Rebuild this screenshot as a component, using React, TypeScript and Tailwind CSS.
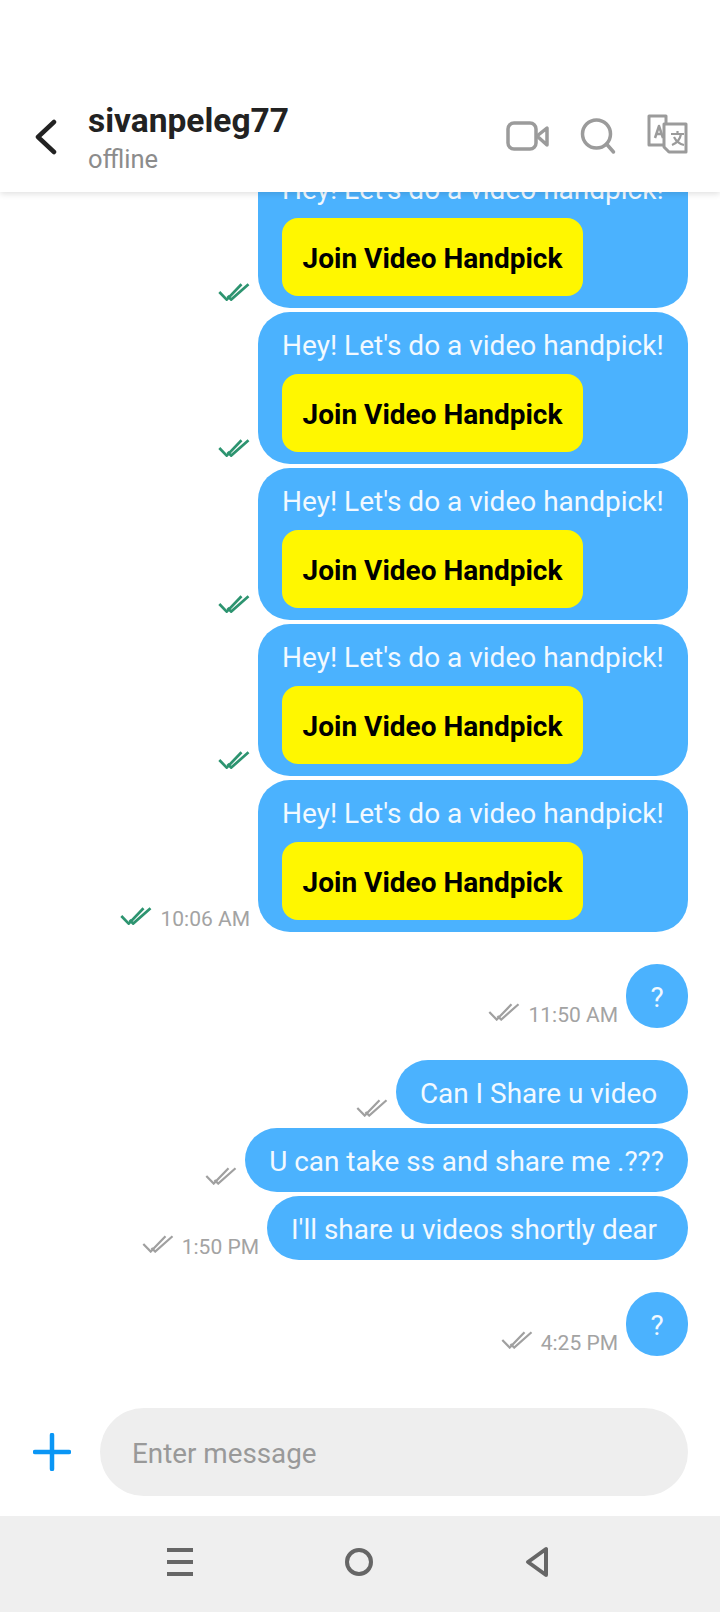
const sans = "font-['Roboto',sans-serif]";

function Ticks({ color, width = 2.2 }: { color: string; width?: number }) {
  return (
    <svg className="mb-[7px]" width="32" height="18" viewBox="0 0 32 18" fill="none" stroke={color} strokeWidth={width}>
      <path d="M1.3 9l7.4 7.6L23.5 1.3" />
      <path d="M9.5 13l3.7 3.6L30.5 1.3" />
    </svg>
  );
}

function Bubble({ text, time }: { text: string; time?: string }) {
  return (
    <div className="flex items-end justify-end">
      <div className="mr-2 flex items-end gap-2">
        <Ticks color="#a0a0a0" />
        {time && <span className="mb-px text-[21px] leading-6 text-[#a3a3a3]">{time}</span>}
      </div>
      <div className="flex h-16 min-w-[62px] items-center justify-center rounded-[32px] bg-[#4bb2fe] px-6 pt-1 text-[27.9px] whitespace-pre text-[#f2f9ff]">
        {text}
      </div>
    </div>
  );
}

function Invite({ time }: { time?: string }) {
  return (
    <div className="flex items-end justify-end">
      <div className="mr-2 flex items-end gap-2">
        <Ticks color="#2d9470" width={2.7} />
        {time && <span className="mb-px text-[21px] leading-6 text-[#a3a3a3]">{time}</span>}
      </div>
      <div className="h-[152px] w-[430px] rounded-[32px] bg-[#4bb2fe] px-6 pt-[14px]">
        <div className="text-[28px] leading-10 whitespace-nowrap text-[#f2f9ff]">Hey! Let's do a video handpick!</div>
        <div className="mt-2 flex h-[78px] w-[301px] items-center justify-center rounded-2xl bg-[#fff700] pt-1 text-[28px] font-bold text-black">
          Join Video Handpick
        </div>
      </div>
    </div>
  );
}

export default function App() {
  return (
    <div className={`${sans} flex h-[1612px] w-[720px] flex-col overflow-hidden bg-white`}>
      <header className="relative z-10 flex h-[192px] shrink-0 items-start bg-white pt-[100px] shadow-[0_2px_6px_rgba(0,0,0,0.12)]">
        <svg className="mt-[19px] ml-[34px]" width="24" height="36" viewBox="0 0 24 36" fill="none" stroke="#222" strokeWidth="4.5" strokeLinecap="round" strokeLinejoin="round">
          <path d="M20 3L4 18l16 15" />
        </svg>
        <div className="mt-px ml-[30px] flex-1">
          <div className="text-[33.5px] leading-10 font-bold text-[#222]">sivanpeleg77</div>
          <div className="text-[25.5px] leading-9 text-[#8c8c8c]">offline</div>
        </div>
        <svg className="mt-[12px] mr-[30px]" width="184" height="44" viewBox="0 0 184 44" fill="none" stroke="#9b9b9b" strokeWidth="3.5" strokeLinejoin="round">
          <rect x="2" y="11" width="28" height="26" rx="6" />
          <path d="M31 24l10-8v17z" />
          <circle cx="90.5" cy="22" r="14" />
          <path d="M100.5 32l7 8" strokeLinecap="round" />
          <path d="M157 33h-14V4h17v7" strokeWidth="3" />
          <path d="M160 12h20v28h-17l-5-5V12z" strokeWidth="3" />
          <path d="M149 26l4-12 4 12M150.5 22h5" strokeWidth="2.5" />
          <path d="M165 22h13M171.5 19v3M175 22c-1 6-4 9-9 11M168 25c2 4 5 7 10 8" strokeWidth="2.2" />
        </svg>
      </header>
      <main className="flex min-h-0 flex-1 flex-col justify-end overflow-hidden pr-8 pb-[52px]">
        <div className="flex flex-col gap-1">
          <Invite />
          <Invite />
          <Invite />
          <Invite />
          <Invite time="10:06 AM" />
        </div>
        <div className="mt-8"><Bubble text="?" time="11:50 AM" /></div>
        <div className="mt-8 flex flex-col gap-1">
          <Bubble text="Can I Share u video " />
          <Bubble text="U can take ss and share me .???" />
          <Bubble text="I'll share u videos shortly dear " time="1:50 PM" />
        </div>
        <div className="mt-8"><Bubble text="?" time="4:25 PM" /></div>
      </main>
      <div className="flex h-[108px] shrink-0 items-start pr-8">
        <svg className="mt-[25px] ml-[33px] shrink-0" width="38" height="38" viewBox="0 0 38 38" stroke="#0a96f5" strokeWidth="4.5" strokeLinecap="round">
          <path d="M19 2v34M2 19h34" />
        </svg>
        <div className="ml-[29px] flex h-[88px] flex-1 items-center rounded-[44px] bg-[#eeeeee] pt-1 pl-8 text-[27.8px] text-[#999]">Enter message</div>
      </div>
      <nav className="flex h-[96px] shrink-0 items-center justify-center gap-[152px] bg-[#efefef] pr-[5px] pb-1">
        <div className="flex h-[28px] w-[26px] flex-col justify-between">
          <div className="h-1 bg-[#666]" />
          <div className="h-1 bg-[#666]" />
          <div className="h-1 bg-[#666]" />
        </div>
        <div className="h-[28px] w-[28px] rounded-full border-4 border-[#666]" />
        <svg width="24" height="32" viewBox="0 0 24 32" fill="none" stroke="#666" strokeWidth="4" strokeLinejoin="round">
          <path d="M21 3v26L3 16z" />
        </svg>
      </nav>
    </div>
  );
}
